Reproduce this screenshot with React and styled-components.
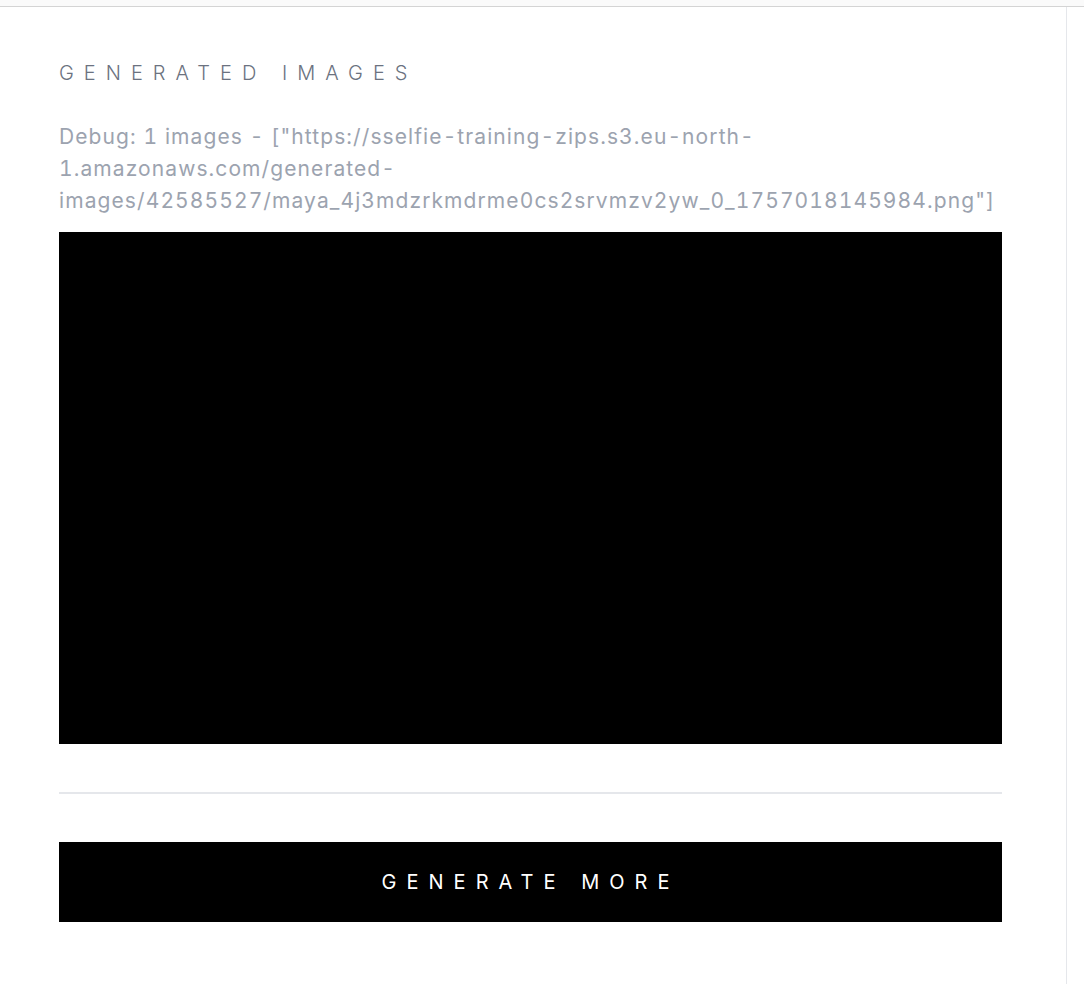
import styled, { createGlobalStyle } from "styled-components";

const GlobalStyle = createGlobalStyle`
  html, body {
    margin: 0;
    padding: 0;
    background: #fff;
  }
  body {
    font-family: Inter, "Liberation Sans", sans-serif;
    -webkit-font-smoothing: antialiased;
  }
`;

const Page = styled.div`
  display: flex;
  flex-direction: column;
  min-height: 984px;
`;

const TopStrip = styled.div`
  height: 6px;
  background: #fafafa;
  border-bottom: 1px solid #d4d4d4;
`;

const Body = styled.div`
  display: flex;
  flex: 1;
`;

const Panel = styled.section`
  width: 1067px;
  box-sizing: border-box;
  padding: 52px 64px 0 59px;
  border-right: 1px solid #e5e7eb;
`;

const Side = styled.aside`
  flex: 1;
  background: #fff;
`;

const Title = styled.h2`
  margin: 0;
  font-size: 20px;
  line-height: 28px;
  font-weight: 300;
  letter-spacing: 0.5em;
  text-transform: uppercase;
  color: #6b7280;
`;

const Debug = styled.p`
  margin: 34px 0 15px;
  font-size: 21px;
  line-height: 32px;
  letter-spacing: 0.052em;
  font-variant-numeric: tabular-nums;
  color: #9ca3af;
`;

const ImageBox = styled.div`
  height: 512px;
  background: #000;
`;

const Divider = styled.hr`
  margin: 48px 0 48px;
  border: 0;
  border-top: 2px solid #e5e7eb;
`;

const Button = styled.button`
  display: block;
  width: 100%;
  height: 80px;
  border: 0;
  background: #000;
  color: #fff;
  font-family: inherit;
  font-size: 20px;
  font-weight: 400;
  letter-spacing: 0.5em;
  text-transform: uppercase;
  cursor: pointer;
`;

const images = [
  "https://sselfie-training-zips.s3.eu-north-1.amazonaws.com/generated-images/42585527/maya_4j3mdzrkmdrme0cs2srvmzv2yw_0_1757018145984.png",
];

export default function App() {
  const debugText = `Debug: ${images.length} images - ${JSON.stringify(images)}`;
  return (
    <>
      <GlobalStyle />
      <Page>
        <TopStrip />
        <Body>
          <Panel>
            <Title>Generated Images</Title>
            <Debug>{debugText}</Debug>
            <ImageBox />
            <Divider />
            <Button>Generate More</Button>
          </Panel>
          <Side />
        </Body>
      </Page>
    </>
  );
}
